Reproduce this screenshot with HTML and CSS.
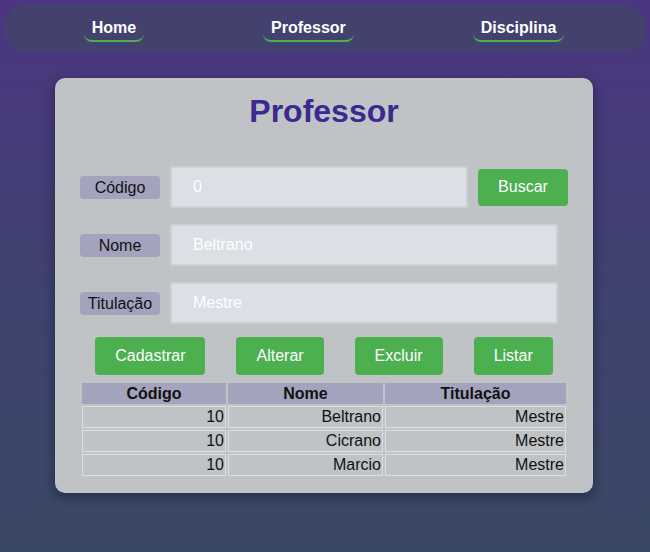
FILE: index.html
```html
<!DOCTYPE html>
<html lang="pt">
<head>
<meta charset="utf-8">
<title>Professor</title>
<link rel="stylesheet" href="styles.css">
</head>
<body>
<nav class="nav">
  <a class="nav-link" href="#">Home</a>
  <a class="nav-link" href="#">Professor</a>
  <a class="nav-link" href="#">Disciplina</a>
</nav>
<main class="card">
  <h1 class="title">Professor</h1>
  <div class="form">
    <div class="row">
      <span class="label">Código</span>
      <input class="field field-short" type="text" value="0">
      <button class="btn">Buscar</button>
    </div>
    <div class="row">
      <span class="label">Nome</span>
      <input class="field" type="text" value="Beltrano">
    </div>
    <div class="row">
      <span class="label">Titulação</span>
      <input class="field" type="text" value="Mestre">
    </div>
  </div>
  <div class="actions">
    <button class="btn">Cadastrar</button>
    <button class="btn">Alterar</button>
    <button class="btn">Excluir</button>
    <button class="btn">Listar</button>
  </div>
  <table class="table">
    <thead>
      <tr><th class="c1">Código</th><th class="c2">Nome</th><th class="c3">Titulação</th></tr>
    </thead>
    <tbody>
      <tr><td>10</td><td>Beltrano</td><td>Mestre</td></tr>
      <tr><td>10</td><td>Cicrano</td><td>Mestre</td></tr>
      <tr><td>10</td><td>Marcio</td><td>Mestre</td></tr>
    </tbody>
  </table>
</main>
</body>
</html>
```
FILE: styles.css
```css
* { box-sizing: border-box; }
html, body { height: 100%; }
body {
  margin: 0;
  padding: 5px 0 0;
  font-family: "Liberation Sans", Arial, sans-serif;
  font-size: 16px;
  background: linear-gradient(to bottom, #4c3581 0%, #3f4270 50%, #394865 100%);
  min-height: 552px;
}
.nav {
  margin: 0 5px;
  height: 47px;
  padding-top: 14px;
  background: #43416e;
  border-radius: 20px;
  display: flex;
  justify-content: center;
  align-items: flex-start;
  gap: 119px;
  padding-right: 2px;
}
.nav-link {
  color: #ffffff;
  font-weight: bold;
  text-decoration: none;
  padding: 0 8px 3px;
  line-height: 18px;
  border-bottom: 2px solid #4caf50;
  border-radius: 8px;
}
.card {
  width: 538px;
  margin: 26px 0 0 55px;
  padding: 15px 25px 15px;
  background: #bfc3c6;
  border-radius: 10px;
  box-shadow: 0 4px 12px rgba(10, 10, 30, 0.45);
}
.title {
  margin: 0 0 36px;
  text-align: center;
  font-size: 32px;
  line-height: 37px;
  color: #3a2a90;
}
.form {
  display: flex;
  flex-direction: column;
  gap: 16px;
}
.row {
  display: flex;
  align-items: center;
  gap: 10px;
}
.label {
  width: 80px;
  height: 23px;
  line-height: 23px;
  text-align: center;
  background: #a3a3bd;
  border-radius: 4px;
  color: #111;
  flex: none;
}
.field {
  width: 388px;
  height: 42px;
  border: 2px solid #cdd0d3;
  background: #dae0e6;
  color: #ffffff;
  font-family: "Liberation Sans", Arial, sans-serif;
  font-size: 16px;
  padding: 0 0 0 21px;
  border-radius: 2px;
  outline: none;
}
.field-short { width: 298px; }
.btn {
  background: #4caf50;
  color: #ffffff;
  border: none;
  border-radius: 4px;
  font-family: "Liberation Sans", Arial, sans-serif;
  font-size: 16px;
  line-height: 18px;
  padding: 10px 20px;
  height: 38px;
}
.row .btn { height: 37px; width: 90px; padding: 0; }
.actions {
  margin-top: 13px;
  display: flex;
  justify-content: center;
  gap: 31px;
}
.table {
  margin-top: 6px;
  width: 100%;
  border-spacing: 2px;
  color: #111;
}
.table th {
  background: #a3a3bd;
  padding: 1px;
  height: 21px;
  font-weight: bold;
  text-align: center;
}
.table td {
  border: 1px solid #dcdee0;
  padding: 1px 1px;
  height: 22px;
  text-align: right;
}
.c1 { width: 144px; }
.c2 { width: 155px; }
.c3 { width: 181px; }
```
